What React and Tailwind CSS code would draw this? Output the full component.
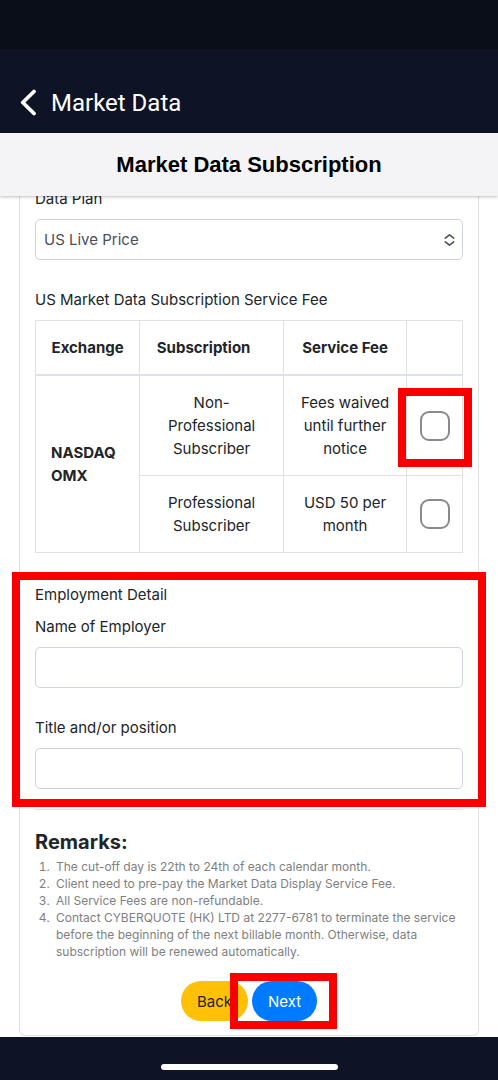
import { useState } from "react";
import { clsx } from "clsx";

const remarks = [
  "The cut-off day is 22th to 24th of each calendar month.",
  "Client need to pre-pay the Market Data Display Service Fee.",
  "All Service Fees are non-refundable.",
  "Contact CYBERQUOTE (HK) LTD at 2277-6781 to terminate the service before the beginning of the next billable month. Otherwise, data subscription will be renewed automatically.",
];

function Highlight({ className }) {
  return (
    <span
      aria-hidden="true"
      className={clsx(
        "pointer-events-none absolute z-10 border-8 border-[#f80000]",
        className
      )}
    />
  );
}

function PlanCheckbox({ label, checked, onChange }) {
  return (
    <input
      type="checkbox"
      aria-label={label}
      checked={checked}
      onChange={onChange}
      className="block size-[30px] appearance-none rounded-[9px] border-2 border-[#8a8a8a] bg-white checked:bg-[#007bff]"
    />
  );
}

function TextField({ id, label }) {
  return (
    <div>
      <label htmlFor={id} className="block">
        {label}
      </label>
      <input
        id={id}
        type="text"
        className="mt-[9px] block h-[41px] w-full rounded-[5px] border border-[#ced4da] bg-white px-2 outline-none"
      />
    </div>
  );
}

function App() {
  const [plan, setPlan] = useState("");

  const togglePlan = (value) => {
    setPlan(plan === value ? "" : value);
  };

  return (
    <div className="flex min-h-screen flex-col bg-white font-['Inter',sans-serif] text-[15px] leading-[23px] text-[#212529]">
      {/* Status bar */}
      <div className="h-[49px] bg-[#0a0e18]" />

      <header className="flex h-[84px] items-center bg-[#0e1326] px-5 pt-6 text-white">
        <button type="button" aria-label="Go back">
          <svg
            width="17"
            height="28"
            viewBox="0 0 17 28"
            fill="none"
            stroke="currentColor"
            strokeWidth="3.8"
            strokeLinecap="round"
            strokeLinejoin="round"
          >
            <path d="M14 2.5 2.8 13.5 14 24.5" />
          </svg>
        </button>
        <span className="ml-[14px] font-['Roboto',sans-serif] text-2xl">
          Market Data
        </span>
      </header>

      <div className="relative z-10 flex h-[63px] items-center justify-center bg-[#f4f4f6] shadow-[0_1px_3px_rgba(0,0,0,0.25)]">
        <h1 className="font-['Liberation_Sans',sans-serif] text-[22px] font-bold text-black">
          Market Data Subscription
        </h1>
      </div>

      {/* Form card, scrolled under the title bar */}
      <main className="-mt-[9px] grow px-[19px]">
        <form
          className="rounded-b-md border border-t-0 border-[#dfdfdf] px-[15px] pb-[14px]"
          onSubmit={(e) => e.preventDefault()}
        >
          <label htmlFor="data-plan" className="block">
            Data Plan
          </label>
          <div className="relative mt-[9px]">
            <select
              id="data-plan"
              className="block h-[41px] w-full appearance-none rounded-[5px] border border-[#ced4da] bg-white px-2 text-[#495057] outline-none"
            >
              <option>US Live Price</option>
            </select>
            <svg
              className="pointer-events-none absolute top-1/2 right-2 -translate-y-1/2"
              width="11"
              height="13"
              viewBox="0 0 11 13"
              fill="none"
              stroke="#495057"
              strokeWidth="1.6"
              strokeLinecap="round"
              strokeLinejoin="round"
            >
              <path d="M1.3 4.6 5.5 1.4 9.7 4.6M1.3 8.4l4.2 3.2 4.2-3.2" />
            </svg>
          </div>

          <h2 id="fee-title" className="mt-7">
            US Market Data Subscription Service Fee
          </h2>
          <table
            aria-labelledby="fee-title"
            className="mt-[9px] w-full table-fixed text-center [&_td]:border [&_td]:border-[#dee2e6] [&_th]:border [&_th]:border-[#dee2e6]"
          >
            <thead className="border-b-2 border-[#dee2e6]">
              <tr>
                <th className="w-[24.4%] py-[15px] font-bold">Exchange</th>
                <th className="w-[33.7%] py-[15px] pr-4 font-bold">
                  Subscription
                </th>
                <th className="w-[28.8%] py-[15px] font-bold">Service Fee</th>
                <th className="py-[15px]" />
              </tr>
            </thead>
            <tbody>
              <tr>
                <th rowSpan={2} className="p-[15px] text-left font-bold">
                  NASDAQ OMX
                </th>
                <td className="p-[15px]">Non-Professional Subscriber</td>
                <td className="p-[15px]">Fees waived until further notice</td>
                <td>
                  <div className="relative mx-auto w-fit">
                    <PlanCheckbox
                      label="Non-Professional Subscriber"
                      checked={plan === "non-professional"}
                      onChange={() => togglePlan("non-professional")}
                    />
                    <Highlight className="-inset-x-[22px] -top-[23px] -bottom-[26px]" />
                  </div>
                </td>
              </tr>
              <tr>
                <td className="p-[15px]">Professional Subscriber</td>
                <td className="p-[15px]">USD 50 per month</td>
                <td>
                  <div className="mx-auto w-fit">
                    <PlanCheckbox
                      label="Professional Subscriber"
                      checked={plan === "professional"}
                      onChange={() => togglePlan("professional")}
                    />
                  </div>
                </td>
              </tr>
            </tbody>
          </table>

          <section className="relative mt-[30px]">
            <h2>Employment Detail</h2>
            <div className="mt-[9px] space-y-7">
              <TextField id="employer" label="Name of Employer" />
              <TextField id="position" label="Title and/or position" />
            </div>
            <Highlight className="-inset-x-[23px] -top-[11px] -bottom-[18px]" />
          </section>

          <hr className="mt-5 border-[#e5e5e5]" />

          <section className="mt-5">
            <h2 className="text-xl leading-6 font-bold">Remarks:</h2>
            <ol className="mt-1 list-decimal pl-[18px] text-xs leading-[17px] text-[#808080]">
              {remarks.map((remark) => (
                <li key={remark} className="pl-[3px]">
                  {remark}
                </li>
              ))}
            </ol>
          </section>

          <div className="mt-[21px] flex justify-center gap-1">
            <button
              type="button"
              className="h-10 rounded-full bg-[#ffc107] px-4"
            >
              Back
            </button>
            <div className="relative">
              <button
                type="submit"
                className="h-10 rounded-full bg-[#007bff] px-4 text-white"
              >
                Next
              </button>
              <Highlight className="-inset-y-2 -right-5 -left-[22px]" />
            </div>
          </div>
        </form>
      </main>

      <footer className="flex h-[43px] items-center justify-center bg-[#0e1326] pt-4">
        <div className="h-[6px] w-[177px] rounded-full bg-white" />
      </footer>
    </div>
  );
}

export default App;
